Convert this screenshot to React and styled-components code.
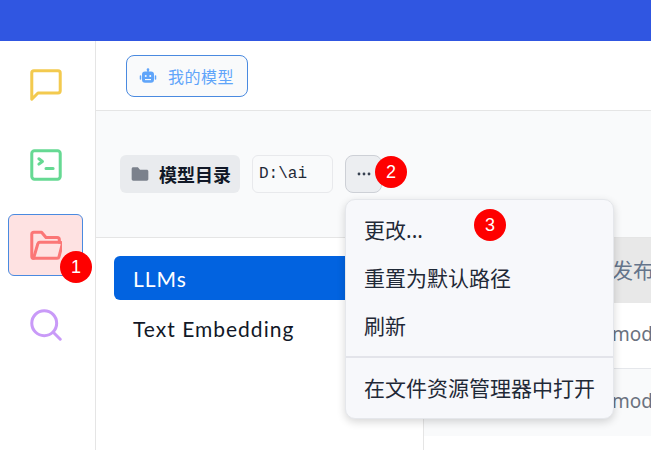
import styled, { createGlobalStyle } from 'styled-components'

const GlobalStyle = createGlobalStyle`
html, body { margin:0; padding:0; background:#fff; }
body { font-family:"Noto Sans","Noto Sans CJK SC",sans-serif; overflow:hidden; }
`
const Page = styled.div`
position:relative;
width:651px;
height:450px;
overflow:hidden;
display:flex;
flex-direction:column;
`
const TopBar = styled.div`
height:41px;
flex:none;
background:#3056e1;
`
const Body = styled.div`
flex:1;
display:flex;
min-height:0;
`
const Sidebar = styled.nav`
width:96px;
flex:none;
box-sizing:border-box;
border-right:1px solid #e5e5e5;
display:flex;
flex-direction:column;
align-items:flex-start;
padding:13px 0 0 8px;
gap:18px;
`
const NavButton = styled.div`
width:75px;
height:62px;
box-sizing:border-box;
display:flex;
align-items:center;
justify-content:center;
border-radius:6px;
border:1px solid ${p => (p.$active ? '#4a8ae0' : 'transparent')};
background:${p => (p.$active ? '#fee2e2' : 'transparent')};
color:${p => p.$color};
`
const Main = styled.div`
flex:1;
min-width:0;
display:flex;
flex-direction:column;
`
const TabBar = styled.div`
height:70px;
flex:none;
box-sizing:border-box;
border-bottom:1px solid #e5e5e5;
padding:14px 0 0 30px;
`
const Tab = styled.div`
display:inline-flex;
align-items:center;
gap:11px;
box-sizing:border-box;
width:122px;
height:42px;
padding-left:12px;
border:1px solid #4a8ae0;
border-radius:8px;
background:#f9fafb;
color:#60a5fa;
font-size:16px;
letter-spacing:.5px;
`
const Toolbar = styled.div`
height:127px;
flex:none;
box-sizing:border-box;
border-bottom:1px solid #e5e5e5;
background:#f9fafb;
display:flex;
align-items:flex-start;
padding:44px 0 0 24px;
`
const FolderLabel = styled.div`
display:flex;
align-items:center;
gap:9px;
box-sizing:border-box;
width:120px;
height:38px;
padding-left:10px;
border-radius:6px;
background:#e9ebee;
color:#111827;
font-size:18px;
font-weight:700;
`
const PathBox = styled.div`
box-sizing:border-box;
width:81px;
height:38px;
margin-left:12px;
padding-left:6px;
display:flex;
align-items:center;
border:1px solid #e8e9ec;
border-radius:6px;
background:#f9fafb;
color:#1f2937;
font-family:"Liberation Mono",monospace;
font-size:16px;
`
const MoreButton = styled.div`
box-sizing:border-box;
width:37px;
height:38px;
margin-left:12px;
display:flex;
align-items:center;
justify-content:center;
border:1px solid #cdd0d6;
border-radius:8px;
background:#eceef1;
color:#374151;
`
const Content = styled.div`
flex:1;
min-height:0;
display:flex;
`
const ModelList = styled.div`
width:328px;
flex:none;
box-sizing:border-box;
border-right:1px solid #e5e5e5;
padding:18px 0 0 18px;
display:flex;
flex-direction:column;
gap:6px;
`
const ListItem = styled.div`
height:44px;
box-sizing:border-box;
padding-left:19px;
display:flex;
align-items:center;
border-radius:6px 0 0 6px;
background:${p => (p.$active ? '#0263e0' : 'transparent')};
color:${p => (p.$active ? '#fff' : '#111827')};
font-family:Lato,sans-serif;
font-size:21px;
letter-spacing:1px;
`
const Table = styled.div`
flex:1;
min-width:0;
display:flex;
flex-direction:column;
`
const TableHead = styled.div`
height:65px;
flex:none;
background:#e8e8e8;
color:#64748b;
font-size:21px;
display:flex;
align-items:center;
box-sizing:border-box;
padding:0 0 4px 188px;
white-space:nowrap;
overflow:hidden;
`
const TableRow = styled.div`
height:${p => p.$h}px;
flex:none;
box-sizing:border-box;
border-bottom:${p => (p.$last ? 'none' : '1px solid #e5e7eb')};
background:${p => (p.$alt ? '#f9fafb' : '#fff')};
color:#6b7280;
font-size:19px;
display:flex;
align-items:center;
padding:0 0 3px 188px;
white-space:nowrap;
overflow:hidden;
`
const Menu = styled.div`
position:absolute;
left:345px;
top:199px;
width:269px;
height:220px;
box-sizing:border-box;
padding-top:6px;
border:1px solid #e5e7eb;
border-radius:10px;
background:#f7f8fb;
box-shadow:0 3px 8px rgba(0,0,0,.16);
color:#1f2937;
font-size:21px;
`
const MenuItem = styled.div`
height:48px;
display:flex;
align-items:center;
padding-left:18px;
white-space:nowrap;
line-height:1;
`
const MenuDivider = styled.div`
height:2px;
margin:6px 0;
background:#e3e4ea;
`
const Badge = styled.div`
position:absolute;
left:${p => p.$x - 16}px;
top:${p => p.$y - 16}px;
width:32px;
height:32px;
border-radius:50%;
background:#fe0000;
color:#fff;
font-family:"Liberation Sans",sans-serif;
font-size:18px;
display:flex;
align-items:center;
justify-content:center;
`

const Icon = ({ children }) => (
  <svg width="32" height="32" viewBox="3 3 18 18" fill="none" stroke="currentColor" strokeWidth="1.7" strokeLinecap="round" strokeLinejoin="round">
    {children}
  </svg>
)

const App = () => {
  return (
    <Page>
      <GlobalStyle />
      <TopBar />
      <Body>
        <Sidebar>
          <NavButton $color="#f3ca4f">
            <Icon><path d="M4 5.200C4 4.500 4.500 4 5.200 4h13.600c.7 0 1.200.5 1.200 1.200v10.100c0 .7-.5 1.200-1.200 1.200H7.500L4 20z" /></Icon>
          </NavButton>
          <NavButton $color="#66d993">
            <Icon><rect x="4" y="4" width="16" height="16" rx="1.500" /><path d="M8 8.500l2 1.500-2 1.500M12 14h4" /></Icon>
          </NavButton>
          <NavButton $active $color="#fb7676">
            <Icon><path d="M5 19.500c-.8 0-1-.6-1-1.200V6c0-.7.500-1.200 1.200-1.200h4.300l2.500 3h6.300c.7 0 1.200.5 1.200 1.200v1.500" /><path d="M5 19.500h13.300c.5 0 .9-.3 1-.8l1.700-6.700c.2-.8-.3-1.500-1.100-1.500H8.500c-.5 0-.9.3-1.100.8z" /></Icon>
          </NavButton>
          <NavButton $color="#c99af8">
            <Icon><circle cx="11" cy="11" r="7" /><path d="M16.500 16.500l3.500 3.500" /></Icon>
          </NavButton>
        </Sidebar>
        <Main>
          <TabBar>
            <Tab>
              <svg width="18" height="18" viewBox="0 0 24 24" fill="currentColor">
                <circle cx="12" cy="3.500" r="1.800" />
                <rect x="11" y="3" width="2" height="4" />
                <rect x="4" y="6" width="16" height="15" rx="4" />
                <rect x="1" y="11" width="2" height="6" rx="1" />
                <rect x="21" y="11" width="2" height="6" rx="1" />
                <circle cx="9" cy="12" r="1.300" fill="#f9fafb" />
                <circle cx="15" cy="12" r="1.300" fill="#f9fafb" />
                <rect x="8" y="16" width="8" height="1.500" fill="#f9fafb" />
              </svg>
              我的模型
            </Tab>
          </TabBar>
          <Toolbar>
            <FolderLabel>
              <svg width="20" height="20" viewBox="0 0 24 24" fill="#7b818c">
                <path d="M2 6c0-1.200.8-2 2-2h5.500l2.500 2.800h8c1.200 0 2 .8 2 2V18c0 1.200-.8 2-2 2H4c-1.200 0-2-.8-2-2z" />
              </svg>
              模型目录
            </FolderLabel>
            <PathBox>D:\ai</PathBox>
            <MoreButton>
              <svg width="14" height="4" viewBox="0 0 14 4" fill="currentColor">
                <circle cx="2" cy="2" r="1.400" /><circle cx="7" cy="2" r="1.400" /><circle cx="12" cy="2" r="1.400" />
              </svg>
            </MoreButton>
          </Toolbar>
          <Content>
            <ModelList>
              <ListItem $active>LLMs</ListItem>
              <ListItem>Text Embedding</ListItem>
            </ModelList>
            <Table>
              <TableHead>发布</TableHead>
              <TableRow $h={66}>model</TableRow>
              <TableRow $h={67} $alt $last>model</TableRow>
            </Table>
          </Content>
        </Main>
      </Body>
      <Menu>
        <MenuItem>更改...</MenuItem>
        <MenuItem>重置为默认路径</MenuItem>
        <MenuItem>刷新</MenuItem>
        <MenuDivider />
        <MenuItem>在文件资源管理器中打开</MenuItem>
      </Menu>
      <Badge $x={76} $y={267}>1</Badge>
      <Badge $x={391} $y={172}>2</Badge>
      <Badge $x={490} $y={225}>3</Badge>
    </Page>
  )
}

export default App
